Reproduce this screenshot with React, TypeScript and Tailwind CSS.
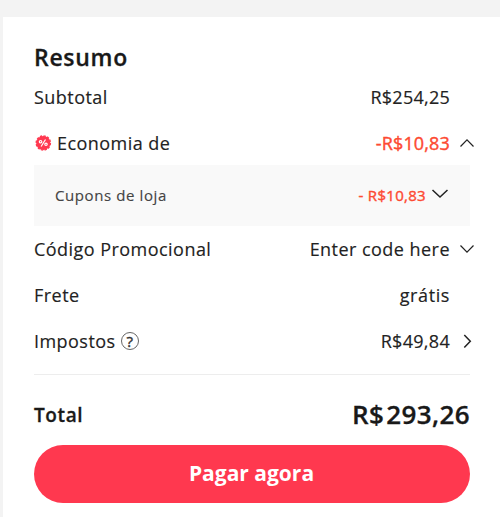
import type { ReactNode } from "react";

function Chevron({ d, className, strokeWidth = 1.2 }: { d: string; className: string; strokeWidth?: number }) {
  return (
    <svg viewBox="0 0 18 18" className={className} fill="none" stroke="#222" strokeWidth={strokeWidth}>
      <path d={d} />
    </svg>
  );
}

const UP = "M2.5 12.5 9 5.8l6.5 6.7";
const DOWN = "M2.5 5.5 9 12.2l6.5-6.7";
const RIGHT = "M6.3 3 12.3 9.3 6.3 15.5";

function Row({ label, value, icon }: { label: ReactNode; value: ReactNode; icon?: ReactNode }) {
  return (
    <div className="flex h-[46px] items-center text-[18px] leading-6 [-webkit-text-stroke:0.15px]">
      <div className="flex items-center tracking-[0.46px]">{label}</div>
      <div className="ml-auto">{value}</div>
      <div className="-mr-[6px] flex w-[26px] shrink-0 justify-end">{icon}</div>
    </div>
  );
}

function DiscountBadge() {
  return (
    <svg viewBox="0 0 18 18" className="mr-[5px] h-[18px] w-[18px]">
      <circle cx="9.3" cy="9" r="7.1" fill="#ff3850" />
      <circle cx="9.3" cy="9" r="7.1" fill="none" stroke="#ff3850" strokeWidth="1.4" strokeDasharray="2.3 1.417" />
      <g fill="none" stroke="#fff" strokeWidth="1.2">
        <path d="m11.5 5.5-4.4 7" />
        <circle cx="6.6" cy="7.7" r="1.2" />
        <circle cx="12" cy="10.3" r="1.2" />
      </g>
    </svg>
  );
}

function HelpIcon() {
  return (
    <span className="ml-[5px] flex h-[18px] w-[18px] items-center justify-center rounded-full border border-[#666] text-[15px] leading-none tracking-normal text-[#333] [-webkit-text-stroke:0.4px]">
      ?
    </span>
  );
}

export default function App() {
  return (
    <div className="h-[517px] w-[500px] overflow-hidden bg-[#f3f3f3] pt-[17px] pl-[3px] font-['Open_Sans','Noto_Sans',sans-serif] text-[#222]">
      <main className="h-[500px] bg-white pt-[24px] pr-[30px] pl-[31px]">
        <h1 className="h-[33px] text-[23px] leading-[33px] font-semibold tracking-[0.7px] text-[#191919] [-webkit-text-stroke:0.3px]">
          Resumo
        </h1>
        <Row label="Subtotal" value={<span className="tracking-[0.25px]">R$254,25</span>} />
        <Row
          label={<><DiscountBadge />Economia de</>}
          value={<span className="tracking-[0.15px] text-[#fd4a32] [-webkit-text-stroke:0.4px]">-R$10,83</span>}
          icon={<Chevron d={UP} className="h-[18px] w-[18px]" />}
        />
        <section className="-mt-px flex h-[61px] items-center bg-[#f9f9f9] pr-[21px] pb-px pl-[21px] text-[15px] text-[#444] [-webkit-text-stroke:0.15px]">
          <span className="tracking-[0.6px]">Cupons de loja</span>
          <span className="ml-auto tracking-[0.3px] text-[#fd4a32] [-webkit-text-stroke:0.4px]">- R$10,83</span>
          <Chevron d="M1.5 5 9 12 16.5 5" strokeWidth={1.5} className="-mt-[3px] ml-[5px] h-[18px] w-[18px]" />
        </section>
        <Row
          label="Código Promocional"
          value={<span className="tracking-[0.46px]">Enter code here</span>}
          icon={<Chevron d={DOWN} className="h-[18px] w-[18px]" />}
        />
        <Row label="Frete" value={<span className="tracking-[0.6px]">grátis</span>} />
        <Row
          label={<>Impostos<HelpIcon /></>}
          value={<span className="tracking-[0.3px]">R$49,84</span>}
          icon={<Chevron d={RIGHT} strokeWidth={1.5} className="h-[18px] w-[18px]" />}
        />
        <div className="mt-[10px] h-px bg-[#ededed]" />
        <div className="flex h-[70px] items-center pt-[10px] text-[#191919] [-webkit-text-stroke:0.3px]">
          <span className="pt-px text-[19px] font-semibold tracking-[0.6px]">Total</span>
          <span className="-mt-[2px] ml-auto text-[26px] font-semibold tracking-[0.4px]">
            <span className="mr-[2px]">R$</span>293,26
          </span>
        </div>
        <button className="flex h-[58px] w-full items-center justify-center rounded-full bg-[#ff384f] pr-px text-[21px] font-bold text-white">
          Pagar agora
        </button>
      </main>
    </div>
  );
}
